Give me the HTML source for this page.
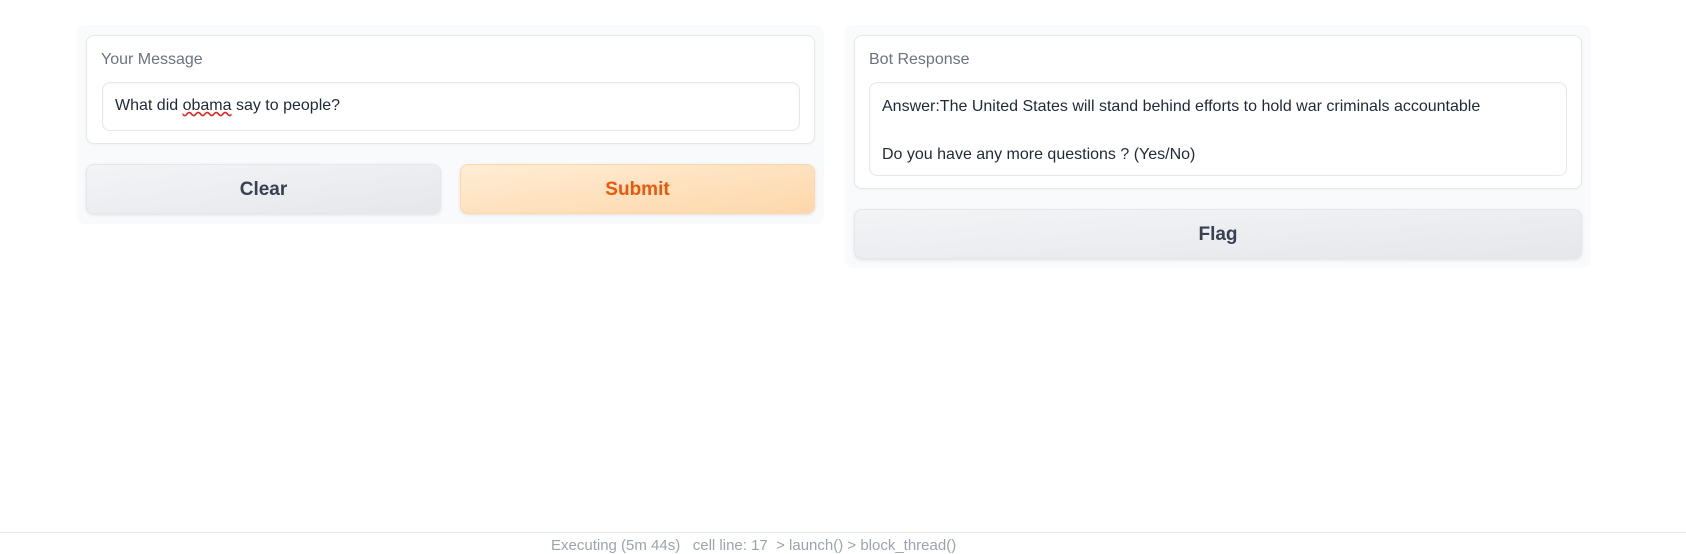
<!DOCTYPE html>
<html><head><style>
body{margin:0;width:1686px;height:544px;background:#fff;position:relative;overflow:hidden;font-family:"Liberation Sans",sans-serif;}
.abs{position:absolute;box-sizing:border-box}
.panel{background:#f9fafb;border-radius:8px}
.card{background:#fff;border:1px solid #e5e7eb;border-radius:8px;box-shadow:0 1px 2px rgba(0,0,0,.04)}
.lbl{font-size:16px;color:#6b7280}
.tb{background:#fff;border:1px solid #e5e7eb;border-radius:8px;box-shadow:inset 0 1px 2px rgba(0,0,0,.04);font-size:16px;color:#1f2937}
.btn{border-radius:8px;display:flex;align-items:center;justify-content:center;font-size:19px;font-weight:bold;box-shadow:0 1px 3px rgba(0,0,0,.1);border:1px solid #e5e7eb}
.sec{background:linear-gradient(to bottom right,#f3f4f6,#e5e7eb);color:#374151}
.pri{background:linear-gradient(to bottom right,#ffedd5,#fed7aa);color:#ea580c;border-color:#fed7aa}
</style></head><body>
<div class="abs panel" style="left:77px;top:25px;width:747px;height:199px"></div>
<div class="abs card" style="left:86px;top:35px;width:729px;height:109px"></div>
<div class="abs lbl" style="left:101px;top:51px">Your Message</div>
<div class="abs tb" style="left:102px;top:82px;width:698px;height:49px;padding:14px 12px">What did <span style="text-decoration:underline wavy #dc2626">obama</span> say to people?</div>
<div class="abs btn sec" style="left:86px;top:164px;width:355px;height:50px;padding-top:2px">Clear</div>
<div class="abs btn pri" style="left:460px;top:164px;width:355px;height:50px;padding-top:2px">Submit</div>

<div class="abs panel" style="left:845px;top:25px;width:746px;height:243px"></div>
<div class="abs card" style="left:854px;top:35px;width:728px;height:154px"></div>
<div class="abs lbl" style="left:869px;top:51px">Bot Response</div>
<div class="abs tb" style="left:869px;top:82px;width:698px;height:94px;padding:12px 12px;line-height:24px">Answer:The United States will stand behind efforts to hold war criminals accountable<br><br>Do you have any more questions ? (Yes/No)</div>
<div class="abs btn sec" style="left:854px;top:209px;width:728px;height:50px;padding-top:2px">Flag</div>

<div class="abs" style="left:0;top:532px;width:1686px;height:1px;background:#e5e7eb"></div>
<div class="abs" style="left:551px;top:537px;font-size:15px;color:#9ca3af;white-space:nowrap">Executing (5m 44s) &nbsp; cell line: 17 &nbsp;&gt; launch() &gt; block_thread()</div>
</body></html>
